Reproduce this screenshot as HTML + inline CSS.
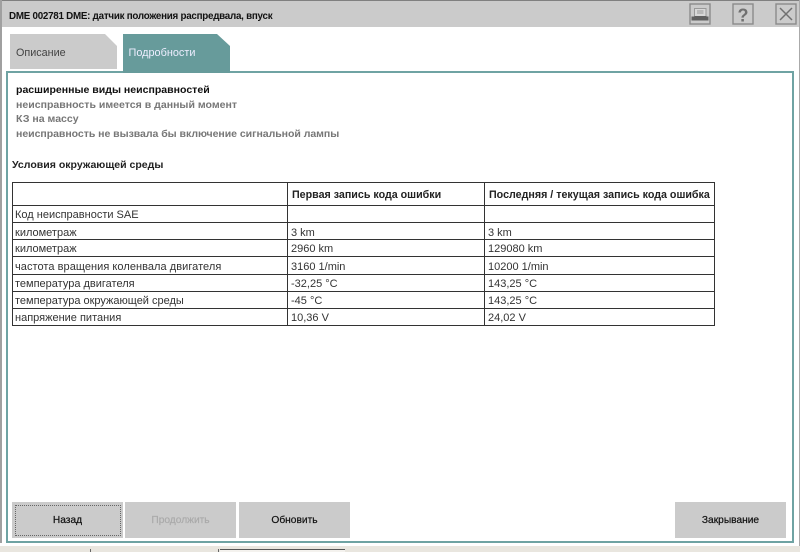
<!DOCTYPE html>
<html><head><meta charset="utf-8">
<style>
html,body{margin:0;padding:0;width:800px;height:552px;overflow:hidden;background:#fff}
body{font-family:"Liberation Sans",sans-serif;position:relative;color:#333}
.a{position:absolute}
.t{position:absolute;white-space:nowrap;font-size:11px;line-height:14px;filter:blur(.3px)}
.b{font-weight:bold;font-size:10.55px}
.l{position:absolute;background:#333}
.btn{position:absolute;top:502px;height:36px;width:111px;background:#cbcbcb;text-align:center;font-size:10.2px;line-height:37px;color:#111;-webkit-text-stroke:.2px currentColor;filter:blur(.2px)}
</style></head><body>
<div class="a" style="left:0;top:0;width:800px;height:27px;background:#cbcbcb;border-top:1px solid #808080;box-sizing:border-box"></div>
<div class="a" style="left:0;top:0;width:2px;height:543px;background:#a0a0a0"></div>
<div class="a" style="left:799px;top:0;width:1px;height:546px;background:#aaa"></div>
<div class="t b" style="left:9px;top:9.5px;font-size:9.8px;letter-spacing:-.25px;color:#111">DME 002781 DME: датчик положения распредвала, впуск</div>

<svg class="a" style="left:688px;top:2px" width="112" height="24" viewBox="688 2 112 24">
<rect x="690" y="4" width="20" height="20" fill="none" stroke="#8a8a8a" stroke-width="1.4"/>
<path d="M694.5 8.5h11.5v8h-11.5z" fill="#d8d8d8" stroke="#999"/>
<path d="M697 11h6.5M697 13h6.5" stroke="#999"/>
<path d="M691.5 16.5h3v-.5h12v.5h2v4h-17z" fill="#606060"/>
<rect x="733" y="4" width="20" height="20" fill="none" stroke="#8a8a8a" stroke-width="1.4"/>
<text x="743" y="21.5" font-family="Liberation Sans" font-weight="bold" font-size="18" text-anchor="middle" fill="#707070">?</text>
<rect x="776" y="4" width="20" height="20" fill="none" stroke="#8a8a8a" stroke-width="1.4"/>
<path d="M780 8l12 12M792 8l-12 12" stroke="#707070" stroke-width="1.5" fill="none"/>
</svg>

<svg class="a" style="left:0;top:30px" width="300" height="46" viewBox="0 30 300 46">
<path d="M10 34H105L117 46V69H10Z" fill="#cbcbcb"/>
<path d="M123 34H217L230 46V72H123Z" fill="#679b9b"/>
</svg>
<div class="t" style="left:16px;top:45.5px;color:#444;font-size:10.8px">Описание</div>
<div class="t" style="left:128.5px;top:45.5px;color:#eef;font-size:10.9px">Подробности</div>

<div class="a" style="left:6px;top:71px;width:788px;height:472px;box-sizing:border-box;border:2px solid #6fa3a3"></div>
<div class="a" style="left:123px;top:71px;width:107px;height:2px;background:#679b9b"></div>

<div class="t b" style="left:16px;top:83px;color:#111">расширенные виды неисправностей</div>
<div class="t b" style="left:16px;top:98px;color:#777">неисправность имеется в данный момент</div>
<div class="t b" style="left:16px;top:112px;color:#777">КЗ на массу</div>
<div class="t b" style="left:16px;top:127px;color:#777;letter-spacing:-.05px">неисправность не вызвала бы включение сигнальной лампы</div>
<div class="t b" style="left:12px;top:158px;color:#222">Условия окружающей среды</div>

<div class="l" style="left:12px;top:182px;width:703px;height:1px"></div>
<div class="l" style="left:12px;top:205px;width:703px;height:1px"></div>
<div class="l" style="left:12px;top:222px;width:703px;height:1px"></div>
<div class="l" style="left:12px;top:239px;width:703px;height:1px"></div>
<div class="l" style="left:12px;top:256px;width:703px;height:1px"></div>
<div class="l" style="left:12px;top:274px;width:703px;height:1px"></div>
<div class="l" style="left:12px;top:291px;width:703px;height:1px"></div>
<div class="l" style="left:12px;top:308px;width:703px;height:1px"></div>
<div class="l" style="left:12px;top:325px;width:703px;height:1px"></div>
<div class="l" style="left:12px;top:182px;width:1px;height:144px"></div>
<div class="l" style="left:287px;top:182px;width:1px;height:144px"></div>
<div class="l" style="left:484px;top:182px;width:1px;height:144px"></div>
<div class="l" style="left:714px;top:182px;width:1px;height:144px"></div>

<div class="t b" style="left:292px;top:188px;color:#222;font-size:10.7px">Первая запись кода ошибки</div>
<div class="t b" style="left:489px;top:188px;color:#222;font-size:10.7px">Последняя / текущая запись кода ошибка</div>

<div class="t" style="left:15px;top:208px">Код неисправности SAE</div>
<div class="t" style="left:15px;top:225.5px">километраж</div><div class="t" style="left:291px;top:225.5px">3 km</div><div class="t" style="left:488px;top:225.5px">3 km</div>
<div class="t" style="left:15px;top:242px">километраж</div><div class="t" style="left:291px;top:242px">2960 km</div><div class="t" style="left:488px;top:242px">129080 km</div>
<div class="t" style="left:15px;top:259.5px;letter-spacing:.05px">частота вращения коленвала двигателя</div><div class="t" style="left:291px;top:259.5px">3160 1/min</div><div class="t" style="left:488px;top:259.5px">10200 1/min</div>
<div class="t" style="left:15px;top:277px">температура двигателя</div><div class="t" style="left:291px;top:277px">-32,25 °C</div><div class="t" style="left:488px;top:277px">143,25 °C</div>
<div class="t" style="left:15px;top:294px">температура окружающей среды</div><div class="t" style="left:291px;top:294px">-45 °C</div><div class="t" style="left:488px;top:294px">143,25 °C</div>
<div class="t" style="left:15px;top:311px">напряжение питания</div><div class="t" style="left:291px;top:311px">10,36 V</div><div class="t" style="left:488px;top:311px">24,02 V</div>

<div class="btn" style="left:12px">Назад</div>
<div class="a" style="left:15px;top:505px;width:104px;height:29px;border:1px dotted #666"></div>
<div class="btn" style="left:125px;color:#aaa">Продолжить</div>
<div class="btn" style="left:239px">Обновить</div>
<div class="btn" style="left:675px">Закрывание</div>

<div class="a" style="left:0;top:546px;width:800px;height:6px;background:#e9e6df"></div>
<div class="a" style="left:90px;top:549px;width:1px;height:3px;background:#666"></div>
<div class="a" style="left:218px;top:549px;width:1px;height:3px;background:#666"></div>
<div class="a" style="left:220px;top:549px;width:125px;height:3px;background:#f4f2ee;border-top:1px solid #555;box-sizing:border-box"></div>
</body></html>
